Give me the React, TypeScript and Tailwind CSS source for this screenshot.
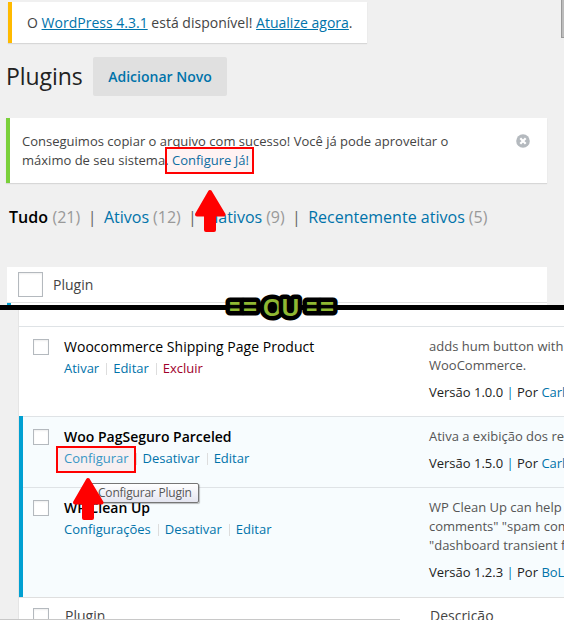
import React from 'react';

const link = 'text-[#0073aa]';

function Box({ big = false }: { big?: boolean }) {
  return (
    <span
      className={
        big
          ? 'block h-[25px] w-[25px] shrink-0 border border-[#b4b9be] bg-white shadow-[inset_0_1px_2px_rgba(0,0,0,0.07)]'
          : 'block h-4 w-4 shrink-0 border border-[#b4b9be] bg-white shadow-[inset_0_1px_2px_rgba(0,0,0,0.07)]'
      }
    />
  );
}

function Arrow({ className }: { className: string }) {
  return (
    <svg className={className} width="32" height="44" viewBox="0 0 32 44">
      <path
        d="M16 3 L29.500 25.500 L3 25.500 Z M12 25 H20 V41 H12 Z"
        fill="#ff0000"
        stroke="#ff0000"
        strokeWidth="4"
        strokeLinejoin="round"
      />
    </svg>
  );
}

function Actions({ items }: { items: { label: string; cls: string }[] }) {
  return (
    <div className="flex h-[19px] items-center text-[13px] leading-[19px]">
      {items.map((it, i) => (
        <React.Fragment key={it.label}>
          {i > 0 && <span className="mr-[6px] ml-[7px] h-3 w-px bg-[#dddddd]" />}
          <span className={it.cls}>{it.label}</span>
        </React.Fragment>
      ))}
    </div>
  );
}

function Row({
  name,
  active = false,
  size,
  actions,
  desc,
  version,
  author,
}: {
  name: string;
  active?: boolean;
  size: string;
  actions: { label: string; cls: string }[];
  desc: string[];
  version: string;
  author: string;
}) {
  return (
    <div
      className={`flex ${size} ${active ? 'bg-[#f7fcfe]' : 'bg-white'}`}
    >
      <div className={`w-1 shrink-0 ${active ? 'bg-[#00a0d2]' : 'border-t border-[#dfe3e6]'}`} />
      <div className="w-[41px] shrink-0 border-t border-[#dfe3e6] pt-3 pl-[10px]">
        <Box />
      </div>
      <div className="w-[365px] shrink-0 border-t border-[#dfe3e6] pt-[10px]">
        <div className={`text-sm leading-5 text-black ${active ? 'font-semibold' : 'tracking-[0.02px]'}`}>{name}</div>
        <div className="pt-[2px]">
          <Actions items={actions} />
        </div>
      </div>
      <div className="w-[135px] border-t border-[#dfe3e6] pt-[10px] text-[13px] leading-[19px] text-[#555]">
        {desc.map((d) => (
          <div key={d}>{d}</div>
        ))}
        <div className="mt-2 text-[#222]">
          Versão {version} <span className={link}>|</span> Por <span className={link}>{author}</span>
        </div>
      </div>
    </div>
  );
}

export default function App() {
  return (
    <div className="relative h-[620px] w-[564px] overflow-hidden bg-[#f0f0f0] font-['Open_Sans','Noto_Sans',sans-serif] whitespace-nowrap text-[#444]">
      <div className="flex h-[305px] flex-col">
        <div className="mt-[2px] ml-2 flex h-[41px] w-[359px] shrink-0 items-center border-l-4 border-[#ffba00] bg-white pl-[15px] text-sm shadow-[0_1px_1px_rgba(0,0,0,0.1)]">
          <p className="tracking-[0.01px]">
            O <span className={`${link} underline`}>WordPress 4.3.1</span> está disponível!{' '}
            <span className={`${link} underline`}>Atualize agora</span>.
          </p>
        </div>

        <div className="mt-[14px] ml-[6px] flex h-[39px] shrink-0 items-center">
          <h1 className="w-[87px] pb-[2px] text-[23px] leading-8 tracking-[-0.05px] text-[#222]">Plugins</h1>
          <div className="flex h-[39px] w-[134px] items-center justify-center rounded-[2px] bg-[#e0e0e0] text-sm font-semibold text-[#0073aa]">
            Adicionar Novo
          </div>
        </div>

        <div className="mt-[22px] ml-[6px] flex h-[65px] w-[541px] shrink-0 items-start border-l-4 border-[#7ad03a] bg-white pt-[14px] pl-3 text-[13px] leading-[19px] shadow-[0_1px_1px_rgba(0,0,0,0.1)]">
          <p className="w-[494px] tracking-[0.01px]">
            Conseguimos copiar o arquivo com sucesso! Você já pode aproveitar o
            <br />
            máximo de seu sistema. <span className={link}>Configure Já!</span>
          </p>
          <svg className="mt-[2px]" width="14" height="14" viewBox="0 0 14 14">
            <circle cx="7" cy="7" r="6.800" fill="#b4b9be" />
            <path d="M4.300 4.300 L9.700 9.700 M9.700 4.300 L4.300 9.700" stroke="#fff" strokeWidth="2.200" />
          </svg>
        </div>

        <div className="mt-[22px] ml-[9px] flex h-6 shrink-0 items-center text-base leading-6 text-[#999]">
          <b className="mr-[4.500px] font-semibold text-black">Tudo</b>(21)
          <span className="mx-[7.500px] text-[#666]">|</span>
          <span className={`mr-1 ${link}`}>Ativos</span>(12)
          <span className="mx-[7.200px] text-[#666]">|</span>
          <span className={`mr-1 ${link}`}>Inativos</span>(9)
          <span className="mx-[7.300px] text-[#666]">|</span>
          <span className={`mr-1 tracking-[0.02px] ${link}`}>Recentemente ativos</span>(5)
        </div>

        <div className="mt-[38px] ml-[7px] flex h-[36px] w-[540px] shrink-0 border-b border-[#e1e1e1] bg-white pt-[5px] pl-[11px]">
          <Box big />
          <span className="ml-[10px] text-sm leading-[26px]">Plugin</span>
        </div>
        <div className="ml-[7px] flex h-[2px] w-[540px] bg-white">
          <span className="w-1 bg-[#00a0d2]" />
        </div>
      </div>

      <div className="h-[5px] bg-black" />

      <div className="ml-[19px] h-[310px] w-[545px] bg-white pt-4 shadow-[-1px_0_0_#e5e5e5]">
        <Row
          name="Woocommerce Shipping Page Product"
          size="h-[90px]"
          actions={[
            { label: 'Ativar', cls: link },
            { label: 'Editar', cls: link },
            { label: 'Excluir', cls: 'text-[#a0002a]' },
          ]}
          desc={['adds hum button with', 'WooCommerce.']}
          version="1.0.0"
          author="Carl"
        />
        <Row
          name="Woo PagSeguro Parceled"
          active
          size="h-[71px]"
          actions={[
            { label: 'Configurar', cls: 'text-[#2e9fd0]' },
            { label: 'Desativar', cls: link },
            { label: 'Editar', cls: link },
          ]}
          desc={['Ativa a exibição dos re']}
          version="1.5.0"
          author="Carl"
        />
        <Row
          name="WP Clean Up"
          active
          size="h-[110px]"
          actions={[
            { label: 'Configurações', cls: link },
            { label: 'Desativar', cls: link },
            { label: 'Editar', cls: link },
          ]}
          desc={['WP Clean Up can help', 'comments" "spam com', '"dashboard transient f']}
          version="1.2.3"
          author="BoL"
        />
        <div className="flex h-[23px] overflow-hidden border-t border-[#dfdfdf] bg-white text-sm leading-5">
          <div className="w-[46px] pt-[10px] pl-[14px]">
            <Box />
          </div>
          <span className="w-[365px] pt-2">Plugin</span>
          <span className="pt-2">Descrição</span>
        </div>
      </div>

      <div className="absolute top-[619px] left-0 h-px w-[400px] bg-[#c8c8c8]" />
      <div className="absolute top-0 left-[561px] h-[38px] w-[3px] border-b border-l border-[#999] bg-[#bcbcbc]" />

      <div className="absolute top-[147px] left-[165px] h-[27px] w-[89px] border-2 border-[#ff0000] bg-[#ff0000]/5" />
      <Arrow className="absolute top-[189px] left-[194px]" />

      <div className="absolute top-[483px] left-[84px] h-5 w-[115px] rounded-[2px] border border-[#767676] bg-linear-to-b from-white to-[#e4e5f0] pl-[13px] text-[12px] leading-[18px] tracking-[-0.2px] text-[#575757] shadow-[1px_1px_1px_rgba(0,0,0,0.25)]">
        Configurar Plugin
      </div>
      <div className="absolute top-[446px] left-[56px] h-[27px] w-20 border-2 border-[#ff0000] bg-[#ff0000]/5" />
      <Arrow className="absolute top-[477px] left-[72px]" />

      <svg
        className="absolute top-[290px] left-[220px] font-['Liberation_Sans',Arial,sans-serif]"
        width="124"
        height="36"
        viewBox="0 0 124 36"
        fill="#8fb833"
        stroke="#000"
        strokeWidth="9"
        strokeLinejoin="round"
        paintOrder="stroke"
        fontWeight="700"
      >
        <text x="9" y="25" fontSize="24" textLength="28">==</text>
        <text x="86" y="25" fontSize="24" textLength="28">==</text>
        <text x="43" y="26" fontSize="24" textLength="36">OU</text>
      </svg>
    </div>
  );
}
